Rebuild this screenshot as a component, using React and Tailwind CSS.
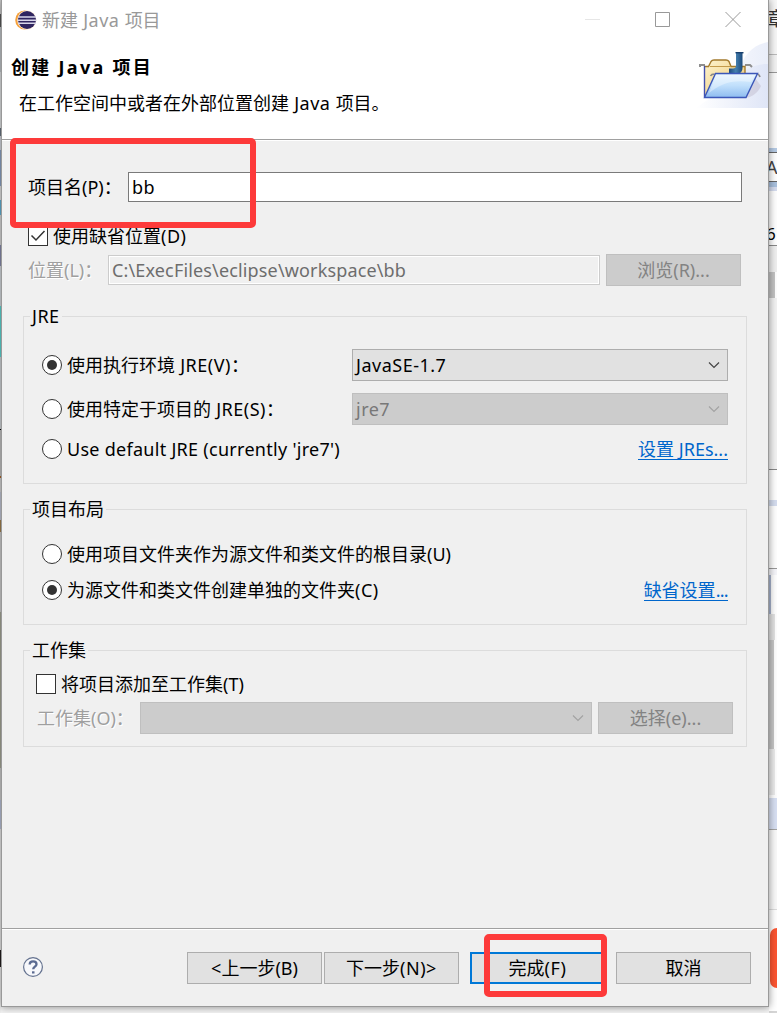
import clsx from 'clsx'

const LEFT_EDGE = [
  ['h-[14px]', 'bg-[#cfcfcf]'],
  ['h-[13px]', 'bg-[#5a5a5a]'],
  ['h-[45px]', 'bg-[#c3c8cc]'],
  ['h-[56px]', 'bg-[#e4e6e8]'],
  ['h-[8px]', 'bg-[#6b7683]'],
  ['h-[14px]', 'bg-[#d7dbe4]'],
  ['h-[36px]', 'bg-[#8fa5c8]'],
  ['h-[14px]', 'bg-[#e6e6e6]'],
  ['h-[15px]', 'bg-[#63b4da]'],
  ['h-[30px]', 'bg-[#dcdcdc]'],
  ['h-[21px]', 'bg-[#8b8fb0]'],
  ['h-[40px]', 'bg-[#d9dde2]'],
  ['h-[51px]', 'bg-[#5fdcd8]'],
  ['h-[72px]', 'bg-[#d4d8dc]'],
  ['h-[1px]', 'bg-black'],
  ['h-[46px]', 'bg-[#c6c6c6]'],
  ['h-[2px]', 'bg-[#b0682a]'],
  ['h-[14px]', 'bg-[#d8d8d8]'],
  ['h-[28px]', 'bg-[#c5c9da]'],
  ['h-[12px]', 'bg-[#a58350]'],
  ['h-[80px]', 'bg-[#d2d2d2]'],
  ['h-[156px]', 'bg-[#a9aa9a]'],
  ['h-[32px]', 'bg-[#d0d0d0]'],
  ['h-[29px]', 'bg-[#bcc4de]'],
  ['h-[121px]', 'bg-[#ededed]'],
  ['h-[17px]', 'bg-[#241f1f]'],
  ['h-[46px]', 'bg-[#efefef]'],
]

function EclipseIcon() {
  return (
    <svg className="w-[22px] h-[22px] shrink-0" viewBox="0 0 22 22">
      <circle cx="9.6" cy="11" r="9.4" fill="#f5a03a" />
      <circle cx="11.8" cy="11" r="9.6" fill="#fde9d2" />
      <circle cx="12" cy="11" r="9" fill="#2f2560" />
      <path d="M3 8h18M2.500 11.200h19M3 14.300h18" stroke="#d9d7ea" strokeWidth="1.500" />
    </svg>
  )
}

function WizardBanner() {
  return (
    <svg className="w-[74px] h-[67px] mt-px shrink-0" viewBox="0 0 74 67">
      <defs>
        <linearGradient id="sweep" x1="0" x2="1">
          <stop offset="0" stopColor="#fff" />
          <stop offset="1" stopColor="#dce3f6" />
        </linearGradient>
        <linearGradient id="folder" x1="0" x2="1" y1="0" y2="1">
          <stop offset="0" stopColor="#fdf3cf" />
          <stop offset="1" stopColor="#edc66c" />
        </linearGradient>
        <linearGradient id="flap" x1="0" x2="0" y1="0" y2="1">
          <stop offset="0" stopColor="#e6f4ff" />
          <stop offset="0.5" stopColor="#c0dffb" />
          <stop offset="1" stopColor="#8ebcf0" />
        </linearGradient>
        <linearGradient id="jay" x1="0" x2="1">
          <stop offset="0" stopColor="#1d4a7c" />
          <stop offset="0.5" stopColor="#4681b0" />
          <stop offset="1" stopColor="#1d4a7c" />
        </linearGradient>
      </defs>
      <path d="M45 30C50 12 60 4 74 1v66H2C20 55 38 46 45 30Z" fill="url(#sweep)" opacity="0.6" />
      <path d="M40 40C50 28 60 23 74 23v44H2Z" fill="url(#sweep)" opacity="0.8" />
      <g transform="translate(-2 0)">
        <path d="M54 57c8-2 12-6 15-12l-6-8Z" fill="#a8a0b4" opacity="0.3" />
        <path d="M8 26v-2h5M53 24h5l2 2" fill="none" stroke="#8f8f8f" strokeWidth="2" />
        <path d="M12.500 56V25.500h4l3-5q1-1.500 3-1.500h12q2 0 3 1.500l2 4.500H53v24Z" fill="url(#folder)" />
        <path d="M12.500 25.500h4l2.500-5q1-1.500 3-1.500h12q2 0 3 1.500l2 5H53v9" fill="none" stroke="#a37a2c" strokeWidth="1.400" />
        <path d="M18 25.500h20" stroke="#c49b4b" />
        <path d="M12.500 25v31" stroke="#4350ae" strokeWidth="1.400" />
        <path d="M44 11h6.500v16q0 5.500-5.500 5.500h-8v-5h4q3 0 3-3Z" fill="url(#jay)" />
        <path d="M43.500 11.700h8" stroke="#173f6d" strokeWidth="1.400" />
        <path d="M18.500 35q1-2 4-2M65 33q2 0 3 3" fill="none" stroke="#888" strokeWidth="1.600" />
        <path d="M23.500 32.500H65.500L54 56.500H12.500Z" fill="url(#flap)" stroke="#3c57b9" strokeWidth="1.400" />
        <path d="M24 34h39l-4 7C40 38 28 43 17 52Z" fill="#fff" opacity="0.35" />
      </g>
    </svg>
  )
}

function Chevron({ disabled }) {
  return (
    <svg className="w-3 h-3 mr-[7px]" viewBox="0 0 12 12" fill="none">
      <path d="M1 3.500l5 5 5-5" stroke={disabled ? '#a3a3a3' : '#444'} strokeWidth="1.200" />
    </svg>
  )
}

// Latin run inside a Chinese label, set a little wider
function Latin({ children }) {
  return <span className="tracking-[0.5px]">{children}</span>
}

function Radio({ checked, className, children }) {
  return (
    <label className={clsx('flex items-center h-8', className)}>
      <span className="w-5 h-5 mr-[5px] rounded-full border border-[#333] bg-white flex items-center justify-center">
        {checked && <span className="w-[10px] h-[10px] rounded-full bg-[#333]" />}
      </span>
      <span>{children}</span>
    </label>
  )
}

function Checkbox({ checked }) {
  return (
    <span className="w-5 h-5 mr-[5px] border border-[#333] bg-white shrink-0">
      {checked && (
        <svg className="w-[18px] h-[18px]" viewBox="0 0 18 18" fill="none">
          <path d="M2.500 8.500l4.500 4.500 8.500-9" stroke="#333" strokeWidth="1.500" />
        </svg>
      )}
    </span>
  )
}

function Combo({ disabled, className, children }) {
  return (
    <div
      className={clsx(
        'h-8 border pl-[3px] flex items-center justify-between',
        disabled ? 'bg-[#ccc] border-[#bfbfbf] text-[#787878]' : 'bg-[#e1e1e1] border-[#adadad]',
        className
      )}
    >
      <Latin>{children}</Latin>
      <Chevron disabled={disabled} />
    </div>
  )
}

function Button({ disabled, primary, className, children }) {
  return (
    <button
      type="button"
      className={clsx(
        'h-8 w-[135px] flex items-center justify-center shrink-0',
        disabled && 'bg-[#ccc] border border-[#bfbfbf] text-[#838383]',
        primary && 'bg-[#e1e1e1] border-2 border-[#0078d7]',
        !disabled && !primary && 'bg-[#e1e1e1] border border-[#adadad]',
        className
      )}
    >
      {children}
    </button>
  )
}

function Group({ title, className, children }) {
  return (
    <section className={clsx('mx-[21px] border border-[#dcdcdc] flex flex-col', className)}>
      <h2 className="-mt-[14px] h-[26px] leading-[26px] ml-[6px] px-[2px] self-start bg-[#f0f0f0]">{title}</h2>
      {children}
    </section>
  )
}

// Slice of the windows behind the dialog, visible along its right side
function RightEdge() {
  return (
    <div className="w-2 h-[1013px] flex flex-col overflow-hidden shrink-0 bg-white">
      <div className="h-[54px] pt-[7px] bg-[#f7f7f7] text-[#333] overflow-hidden whitespace-nowrap">
        <span className="-ml-[2px] text-[19px]">章</span>
      </div>
      <div className="h-[19px] border-y border-t-[#bbb] border-b-[#999] bg-[#f3f3f3]" />
      <div className="h-[75px] bg-[#fbfbfb]" />
      <div className="h-[5px] bg-[#b5cae4] border-b border-[#666]" />
      <div className="h-[29px] border-b border-[#666] text-[#444] leading-[28px]">
        <span className="-ml-[3px]">A</span>
      </div>
      <div className="h-[5px] bg-[#a9c1de]" />
      <div className="h-[4px] bg-[#d5dcef]" />
      <div className="h-[55px] pt-[30px] border-b border-[#888]">
        <span className="block -ml-[3px] leading-[26px] text-[17px]">6</span>
      </div>
      <div className="h-[26px] bg-[#f0f0f0]" />
      <div className="h-[26px] w-[6px] bg-[#c4c4c4]" />
      <div className="h-[172px] bg-[#f3f3f3] border-b border-[#888]" />
      <div className="h-[30px] bg-white" />
      <div className="h-[6px] bg-[#d5ddef]" />
      <div className="h-[63px] bg-white border-b border-[#999]" />
      <div className="h-[6px] bg-[#f6f6fa]" />
      <div className="h-[39px] w-[2px] bg-[#a8b4ce]" />
      <div className="h-[26px] w-[6px] bg-[#e3e3e3]" />
      <div className="h-[109px] w-[5px] bg-[#c8c8c8]" />
      <div className="h-[46px] w-[6px] bg-[#ececec]" />
      <div className="h-[3px]" />
      <div className="h-[32px] bg-[#d8e0f3] border-b border-[#a5a5a5]" />
      <div className="h-[80px] border-b border-[#ddd] bg-[#fafafa]" />
      <div className="h-[18px]" />
      <div className="h-[60px] w-5 ml-px rounded-l-[7px] bg-[#fc5531]" />
      <div className="h-[23px]" />
      <div className="h-[2px] bg-[#d5d5d5]" />
    </div>
  )
}

export default function App() {
  return (
    <div className="relative w-[777px] h-[1013px] overflow-hidden flex bg-[#f4f4f4] text-[18px] leading-6 text-black font-['Noto_Sans','Noto_Sans_CJK_SC',sans-serif] whitespace-nowrap">
      <div className="w-px flex flex-col shrink-0">
        {LEFT_EDGE.map(([height, color], i) => (
          <div key={i} className={clsx(height, color, 'shrink-0')} />
        ))}
      </div>

      {/* Dialog window */}
      <main className="relative w-[768px] h-[1007px] shrink-0 flex flex-col border border-t-0 border-[#999] bg-[#f0f0f0] shadow-[0_0_8px_rgba(0,0,0,0.45)]">
        <header className="h-[141px] shrink-0 flex flex-col bg-white border-b border-white">
          <div className="h-[140px] border-b border-[#a0a0a0]">
            <div className="h-[40px] flex items-center pl-[13px] text-[#999]">
              <EclipseIcon />
              <span className="ml-[5px] -mt-px flex-1">新建<Latin> Java </Latin>项目</span>
              <svg className="w-[156px] h-4 mr-[27px] -mt-[3px]" viewBox="0 0 156 16" fill="none">
                <path d="M0 8.500h15" stroke="#e6e6e6" />
                <path d="M70.500 1.500h14v14h-14z" stroke="#999" />
                <path d="M140.500 1l15 15M155.500 1l-15 15" stroke="#999" />
              </svg>
            </div>
            <div className="flex justify-between">
              <div className="pt-[15px]">
                <h1 className="pl-[9px] font-bold tracking-[2.3px]">创建 Java 项目</h1>
                <p className="pl-[17px] mt-[12px]">在工作空间中或者在外部位置创建<Latin> Java </Latin>项目。</p>
              </div>
              <WizardBanner />
            </div>
          </div>
        </header>

        <div className="mt-[31px] flex items-center h-[30px] pl-[26px]">
          <label className="w-[100px]">项目名(P)：</label>
          <div className="w-[614px] h-[30px] pl-[3px] leading-[28px] border border-[#7a7a7a] bg-white"><Latin>bb</Latin></div>
        </div>
        <label className="mt-[22px] h-[24px] pl-[26px] flex items-center">
          <Checkbox checked />
          <span>使用缺省位置<Latin>(D)</Latin></span>
        </label>
        <div className="mt-[6px] flex items-center h-8 pl-[26px] text-[#9f9f9f]">
          <label className="w-[80px] [text-shadow:1px_1px_#fff]">位置(L)：</label>
          <div className="w-[492px] h-[30px] mr-[6px] pl-[3px] leading-[28px] border border-[#ccc] text-[#6d6d6d] tracking-[0.15px] shadow-[inset_0_0_0_1px_#fff]">
            C:\ExecFiles\eclipse\workspace\bb
          </div>
          <Button disabled>浏览(R)...</Button>
        </div>

        <Group title={<Latin>JRE</Latin>} className="mt-[30px] h-[168px] pr-[18px]">
          <div className="mt-[20px] pl-[18px] flex justify-between">
            <Radio checked>使用执行环境<Latin> JRE(V)</Latin>：</Radio>
            <Combo className="w-[376px]">JavaSE-1.7</Combo>
          </div>
          <div className="mt-[12px] pl-[18px] flex justify-between">
            <Radio>使用特定于项目的<Latin> JRE(S)</Latin>：</Radio>
            <Combo disabled className="w-[376px]">jre7</Combo>
          </div>
          <div className="mt-[8px] pl-[18px] flex justify-between items-center">
            <Radio className="tracking-[0.28px]">Use default JRE (currently 'jre7')</Radio>
            <a className="text-[#0066cc] leading-[20px] border-b border-[#0066cc]">设置 JREs...</a>
          </div>
        </Group>

        <Group title="项目布局" className="mt-[25px] h-[116px] pr-[18px]">
          <Radio className="mt-[16px] ml-[18px]">使用项目文件夹作为源文件和类文件的根目录(U)</Radio>
          <div className="mt-[4px] pl-[18px] flex justify-between items-center">
            <Radio checked>为源文件和类文件创建单独的文件夹<Latin>(C)</Latin></Radio>
            <a className="text-[#0066cc] leading-[20px] border-b border-[#0066cc]">
              缺省设置<span className="tracking-[-0.7px]">...</span>
            </a>
          </div>
        </Group>

        <Group title="工作集" className="mt-[25px] h-[97px]">
          <label className="mt-[9px] h-[24px] ml-[12px] flex items-center">
            <Checkbox />
            将项目添加至工作集(T)
          </label>
          <div className="mt-[6px] flex items-center h-8 pl-[13px]">
            <label className="w-[103px] text-[#9f9f9f] [text-shadow:1px_1px_#fff]">工作集(O)：</label>
            <Combo disabled className="w-[452px] mr-[6px]" />
            <Button disabled>选择(e)...</Button>
          </div>
        </Group>

        <footer className="mt-auto h-[78px] flex border-t border-[#a0a0a0]">
          <div className="flex-1 flex border-t border-white pt-[22px] pl-[21px]">
            <svg className="w-5 h-5 mt-[5px] mr-[144px]" viewBox="0 0 20 20" fill="none">
              <circle cx="10" cy="10" r="9.400" fill="#f7f8fb" stroke="#64728f" strokeWidth="1.200" />
              <path d="M6.700 7.500C6.700 3.200 13.500 3.500 13.500 7.200 13.500 9.600 10.200 9.800 10.200 12.300" stroke="#5b6b91" strokeWidth="2.300" />
              <path d="M9 14.300h2.500v2.200H9z" fill="#5b6b91" />
            </svg>
            <Button>&lt;上一步(B)</Button>
            <Button className="ml-[2px]">下一步<Latin>(N)&gt;</Latin></Button>
            <Button primary className="ml-[11px]">完成<Latin>(F)</Latin></Button>
            <Button className="ml-[11px]">取消</Button>
          </div>
        </footer>

        {/* Highlight marks */}
        <div className="absolute left-[8px] top-[138px] w-[246px] h-[90px] border-[6px] border-[#fd3a3a] rounded-[5px]" />
        <div className="absolute left-[482px] top-[934px] w-[123px] h-[63px] border-[6px] border-[#fd3a3a] rounded-[5px]" />
      </main>

      <RightEdge />
    </div>
  )
}
